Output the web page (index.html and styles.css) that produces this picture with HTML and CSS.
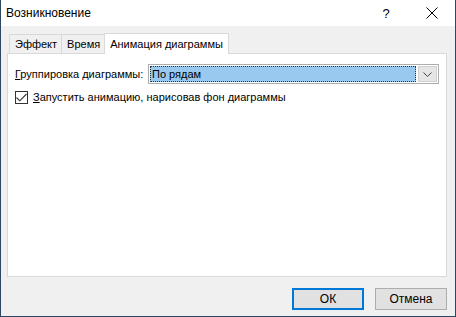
FILE: index.html
```html
<!DOCTYPE html>
<html lang="ru">
<head>
    <meta charset="UTF-8">
    <title>Возникновение</title>
    <link rel="stylesheet" href="styles.css">
</head>
<body>
    <div class="dialog">
        <div class="titlebar">
            <span class="title">Возникновение</span>
            <span class="title-btn help">?</span>
            <span class="title-btn close">
                <svg width="12" height="12" viewBox="0 0 12 12"><path d="M0.5 0.5 L11.5 11.5 M11.5 0.5 L0.5 11.5" stroke="#000" stroke-width="1" fill="none"/></svg>
            </span>
        </div>

        <div class="content">
            <div class="tabs">
                <div class="tab">Эффект</div>
                <div class="tab">Время</div>
                <div class="tab active">Анимация диаграммы</div>
            </div>

            <div class="panel">
                <div class="row">
                    <label class="label"><u>Г</u>руппировка диаграммы:</label>
                    <div class="combo">
                        <div class="combo-value"><span>По рядам</span></div>
                        <div class="combo-btn">
                            <svg width="9" height="5" viewBox="0 0 9 5"><path d="M0.5 0.5 L4.5 4.5 L8.5 0.5" stroke="#444" stroke-width="1" fill="none"/></svg>
                        </div>
                    </div>
                </div>
                <div class="check-row">
                    <span class="checkbox">
                        <svg width="11" height="9" viewBox="0 0 11 9"><path d="M0.5 4.5 L3.8 7.8 L10.5 1" stroke="#333" stroke-width="1.1" fill="none"/></svg>
                    </span>
                    <span class="check-text"><u>З</u>апустить анимацию, нарисовав фон диаграммы</span>
                </div>
            </div>

            <div class="footer">
                <button class="btn default">ОК</button>
                <button class="btn">Отмена</button>
            </div>
        </div>
    </div>
</body>
</html>
```

FILE: styles.css
```css
* {
    margin: 0;
    padding: 0;
    box-sizing: border-box;
}

body {
    width: 456px;
    height: 317px;
    font-family: "Liberation Sans", Arial, sans-serif;
    font-size: 11px;
    color: #000;
    background: #2b4763;
    overflow: hidden;
}

.dialog {
    width: 456px;
    height: 317px;
    border: 1px solid #2b4763;
    border-top: none;
    display: flex;
    flex-direction: column;
    background: #f0f0f0;
}

.titlebar {
    height: 26px;
    background: #fff;
    display: flex;
    align-items: center;
    padding-left: 5px;
}

.title {
    flex: 1;
    font-size: 12px;
}

.title-btn {
    width: 46px;
    height: 26px;
    display: flex;
    align-items: center;
    justify-content: center;
}

.help {
    font-size: 13px;
}

.content {
    flex: 1;
    padding: 7px 8px 0 6px;
    display: flex;
    flex-direction: column;
}

.tabs {
    display: flex;
    align-items: flex-end;
    height: 20px;
    padding-left: 2px;
    white-space: nowrap;
}

.tab {
    height: 19px;
    padding: 0 4px 0 5px;
    border: 1px solid #d9d9d9;
    border-bottom: none;
    border-right: none;
    background: #f0f0f0;
    line-height: 19px;
}

.tab.active {
    height: 21px;
    background: #fff;
    border-right: 1px solid #d9d9d9;
    padding: 0 5px 0 5px;
    margin-bottom: -1px;
    position: relative;
    z-index: 1;
    line-height: 20px;
}

.panel {
    height: 224px;
    background: #fff;
    border: 1px solid #d9d9d9;
    padding: 10px 7px 0 7px;
}

.row {
    display: flex;
    align-items: center;
    height: 20px;
}

.label {
    width: 133px;
    white-space: nowrap;
}

.combo {
    flex: 1;
    height: 20px;
    border: 1px solid #adadad;
    display: flex;
    background: #fff;
}

.combo-value {
    flex: 1;
    padding: 1px;
}

.combo-value span {
    display: block;
    height: 100%;
    background: #99c9ef;
    border: 1px dotted #333;
    padding-left: 1px;
    line-height: 14px;
}

.combo-btn {
    width: 19px;
    margin: 1px;
    background: #e5e5e5;
    border: 1px solid #d0d0d0;
    display: flex;
    align-items: center;
    justify-content: center;
}

.check-row {
    display: flex;
    align-items: center;
    margin-top: 5px;
    height: 16px;
}

.checkbox {
    width: 13px;
    height: 13px;
    border: 1px solid #333;
    margin-right: 5px;
    display: flex;
    align-items: center;
    justify-content: center;
    background: #fff;
}

.check-text {
    white-space: nowrap;
}

.footer {
    display: flex;
    justify-content: flex-end;
    gap: 11px;
    padding-top: 11px;
}

.btn {
    width: 72px;
    height: 22px;
    font-family: inherit;
    font-size: 12px;
    background: #e1e1e1;
    border: 1px solid #adadad;
}

.btn.default {
    border: 2px solid #0078d7;
}
```
